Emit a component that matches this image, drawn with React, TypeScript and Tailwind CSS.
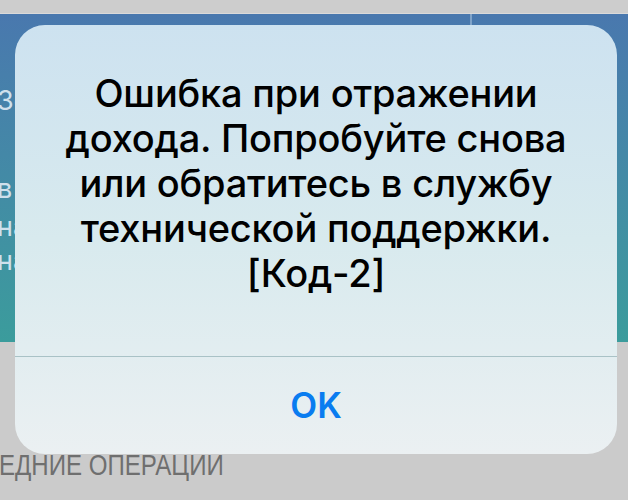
import React from 'react';

const lines = [
  'Ошибка при отражении',
  'дохода. Попробуйте снова',
  'или обратитесь в службу',
  'технической поддержки.',
  '[Код-2]',
];

export default function App() {
  return (
    <div
      className="relative w-[628px] h-[500px] overflow-hidden bg-[#cbcbcb]"
      style={{ fontFamily: 'Inter, "Noto Sans", sans-serif' }}
    >
      {/* status strip */}
      <div className="h-[14px] bg-[#cdcdcd] border-b border-[#dadada]" />

      {/* coloured header behind the alert */}
      <div className="h-[328px] bg-gradient-to-b from-[#4978ae] to-[#3b9c9c] flex">
        <div className="flex flex-col text-[27px] leading-[34px] text-[#cfe0ec] -ml-[3px] pt-[70px]">
          <span>Зо</span>
          <span className="mt-[54px]">в</span>
          <span className="mt-[4px]">на</span>
          <span>на</span>
        </div>
        <div className="ml-[440px] w-[2px] h-[12px] bg-[#7fa3c9]" />
      </div>

      {/* section title below */}
      <div
        className="pt-[108px] -ml-[1px] text-[29px] leading-[30px] text-[#6f6f6f] whitespace-nowrap origin-left scale-x-[0.83]"
        style={{ fontFamily: '"Liberation Sans", sans-serif' }}
      >
        ЕДНИЕ ОПЕРАЦИИ
      </div>

      {/* alert */}
      <div className="absolute left-[15px] top-[25px] w-[602px] h-[429px] rounded-[30px] overflow-hidden flex flex-col bg-gradient-to-b from-[#cde2f0] via-[#d8eaee] to-[#ebf0f2]">
        <div className="h-[331px] pt-[46px] flex flex-col items-center text-[38px] leading-[45px] font-medium text-black tracking-[-0.2px]">
          {lines.map(l => (
            <span key={l}>{l}</span>
          ))}
        </div>
        <div className="h-px bg-[#a9c2c6]" />
        <div className="flex-1 flex items-center justify-center text-[35px] font-semibold text-[#0a7cf0]">
          OK
        </div>
      </div>
    </div>
  );
}
